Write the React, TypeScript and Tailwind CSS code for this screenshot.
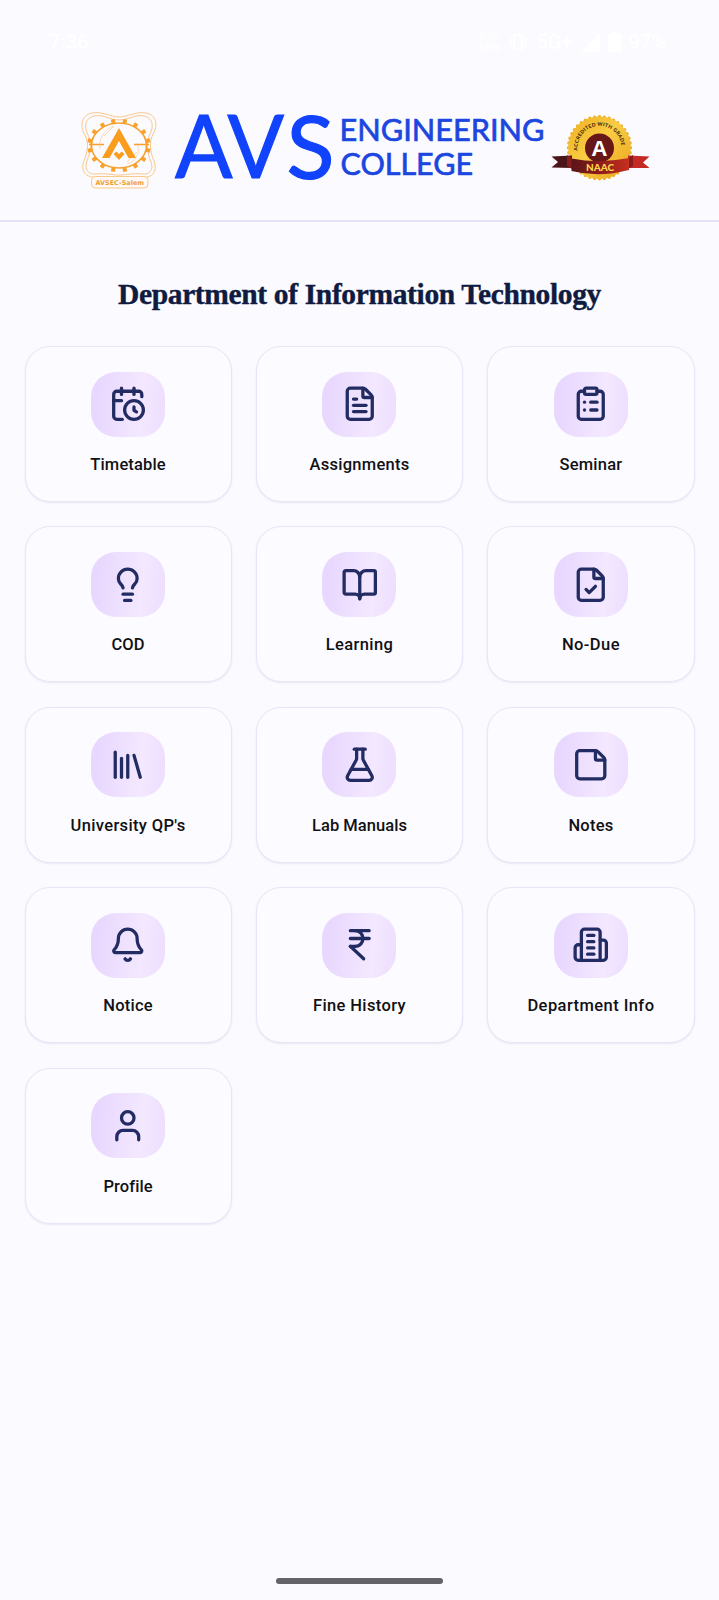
import React from "react";

type Item = { label: string; width: number; icon: string[]; circles?: [number, number, number][]; rects?: [number, number, number, number, number][] };

const FILE = ["M6 22a2 2 0 0 1-2-2V4a2 2 0 0 1 2-2h8a2.4 2.4 0 0 1 1.704.706l3.588 3.588A2.4 2.4 0 0 1 20 8v12a2 2 0 0 1-2 2z", "M14 2v5a1 1 0 0 0 1 1h5"];

const items: Item[] = [
  { label: "Timetable", width: 75.5, icon: ["M21 7.5V6a2 2 0 0 0-2-2H5a2 2 0 0 0-2 2v14a2 2 0 0 0 2 2h3.5", "M16 2v4", "M8 2v4", "M3 10h5", "M16 14v2.2l1.6 1"], circles: [[16, 16, 6]] },
  { label: "Assignments", width: 100, icon: [...FILE, "M10 9H8", "M16 13H8", "M16 17H8"] },
  { label: "Seminar", width: 63, icon: ["M16 4h2a2 2 0 0 1 2 2v14a2 2 0 0 1-2 2H6a2 2 0 0 1-2-2V6a2 2 0 0 1 2-2h2", "M12 11h4", "M12 16h4", "M8 11h.01", "M8 16h.01"], rects: [[8, 2, 8, 4, 1]] },
  { label: "COD", width: 33, icon: ["M15 14c.2-1 .7-1.7 1.5-2.5 1-.9 1.5-2.2 1.5-3.5A6 6 0 0 0 6 8c0 1 .2 2.2 1.5 3.5.7.7 1.3 1.5 1.5 2.5", "M9 18h6", "M10 22h4"] },
  { label: "Learning", width: 67.5, icon: ["M12 7v14", "M3 18a1 1 0 0 1-1-1V4a1 1 0 0 1 1-1h5a4 4 0 0 1 4 4 4 4 0 0 1 4-4h5a1 1 0 0 1 1 1v13a1 1 0 0 1-1 1h-6a3 3 0 0 0-3 3 3 3 0 0 0-3-3z"] },
  { label: "No-Due", width: 58, icon: [...FILE, "m9 15 2 2 4-4"] },
  { label: "University QP's", width: 115, icon: ["m16 6 4 14", "M12 6v14", "M8 8v12", "M4 4v16"] },
  { label: "Lab Manuals", width: 95, icon: ["M14 2v6a2 2 0 0 0 .245.96l5.51 10.08A2 2 0 0 1 18 22H6a2 2 0 0 1-1.755-2.96l5.51-10.08A2 2 0 0 0 10 8V2", "M8.5 2h7", "M6.453 15h11.094"] },
  { label: "Notes", width: 45, icon: ["M21 9a2.4 2.4 0 0 0-.706-1.706l-3.588-3.588A2.4 2.4 0 0 0 15 3H5a2 2 0 0 0-2 2v14a2 2 0 0 0 2 2h14a2 2 0 0 0 2-2z", "M15 3v5a1 1 0 0 0 1 1h5"] },
  { label: "Notice", width: 49.5, icon: ["M10.268 21a2 2 0 0 0 3.464 0", "M3.262 15.326A1 1 0 0 0 4 17h16a1 1 0 0 0 .74-1.673C19.41 13.956 18 12.499 18 8A6 6 0 0 0 6 8c0 4.499-1.411 5.956-2.738 7.326"] },
  { label: "Fine History", width: 93, icon: ["M6 3h12", "M6 8h12", "m6 13 8.5 8", "M6 13h3", "M9 13c6.667 0 6.667-10 0-10"] },
  { label: "Department Info", width: 127, icon: ["M6 22V4a2 2 0 0 1 2-2h8a2 2 0 0 1 2 2v18Z", "M6 12H4a2 2 0 0 0-2 2v6a2 2 0 0 0 2 2h2", "M18 9h2a2 2 0 0 1 2 2v9a2 2 0 0 1-2 2h-2", "M10 6h4", "M10 10h4", "M10 14h4", "M10 18h4"] },
  { label: "Profile", width: 49, icon: ["M19 21v-2a4 4 0 0 0-4-4H9a4 4 0 0 0-4 4v2"], circles: [[12, 7, 4]] },
];

/** Spreads or tightens the letters so that the text takes exactly `width` pixels. */
function FitText({ width, children }: { width: number; children: string }) {
  const ref = React.useRef<HTMLSpanElement>(null);
  const [spacing, setSpacing] = React.useState(0);
  React.useLayoutEffect(() => {
    if (!ref.current) return;
    const natural = ref.current.getBoundingClientRect().width - spacing * children.length;
    setSpacing((width - natural) / children.length);
  }, [width, children]);
  return (
    <span ref={ref} className="inline-block whitespace-nowrap" style={{ letterSpacing: spacing }}>
      {children}
    </span>
  );
}

function Card({ item }: { item: Item }) {
  return (
    <div className="flex h-[156px] flex-col items-center rounded-[25px] border border-[#e8e5f6] bg-[#fcfbff] pt-[24.5px] shadow-[0_1px_2px_rgba(80,70,150,0.10)]">
      <div className="flex h-[65px] w-[74px] items-center justify-center rounded-[25px] bg-[linear-gradient(95deg,#e8d7fe_10%,#f3e8ff_68%,#ecddfe_100%)]">
        <svg className="size-[37.5px]" viewBox="0 0 24 24" fill="none" stroke="#222c62" strokeWidth="2.1" strokeLinecap="round" strokeLinejoin="round">
          {item.icon.map((d) => <path key={d} d={d} />)}
          {item.circles?.map(([x, y, r]) => <circle key={x} cx={x} cy={y} r={r} />)}
          {item.rects?.map(([x, y, w, h, r]) => <rect key={x} x={x} y={y} width={w} height={h} rx={r} />)}
        </svg>
      </div>
      <div className="mt-[16.5px] font-['Roboto',sans-serif] text-[16.5px] leading-[24px] font-medium text-[#111114]">
        <FitText width={item.width}>{item.label}</FitText>
      </div>
    </div>
  );
}

const teeth = Array.from({ length: 16 }, (_, i) => i * 22.5 + 11.25);
const scallops = Array.from({ length: 40 }, (_, i) => (i * Math.PI) / 20);

function Crest() {
  return (
    <svg className="h-[80px] w-[78px] shrink-0" viewBox="80 111 78 80">
      <g fill="none" stroke="#f9c98b" strokeWidth="1">
        <path d="M92 113C103 111 110 117 119 117S136 111 146 113C157 115 158 126 153 134C149 142 150 152 154 161C158 172 152 178 143 177H96C86 178 80 171 84 161C88 151 89 143 85 135C79 125 82 115 92 113Z" />
        <path d="M94 116C104 114 110 120 119 120S136 114 144 116C153 118 154 126 150 134C146 142 147 153 151 162C154 170 149 175 142 174C132 173 127 175 119 175S106 173 96 174C88 175 84 169 87 161C91 151 92 143 88 135C83 125 86 118 94 116Z" />
        <rect x="91.5" y="176.5" width="56.500" height="11.500" rx="4" fill="#fffaf5" />
      </g>
      <g fill="#f8a12c">
        {teeth.map((a) => (
          <rect key={a} x="-2" y="-2.200" width="4" height="4.500" transform={`translate(${119 + 29.5 * Math.cos((a * Math.PI) / 180)} ${145.5 + 24.5 * Math.sin((a * Math.PI) / 180)}) rotate(${a + 90})`} />
        ))}
      </g>
      <ellipse cx="119" cy="145.500" rx="27.500" ry="22.500" fill="none" stroke="#f8a12c" strokeWidth="1.600" />
      <path d="M100 149C98 139 105 129 114 126M137 143C141 153 136 161 127 164M104 136L113 127M127 162L137 152" fill="none" stroke="#fbd3a0" strokeWidth="0.8" />
      <path d="M89 144.500H104M134 144.500H149" stroke="#f8a12c" strokeWidth="1.500" />
      <path d="M119 128L102 158H109.500L119 141L128.500 158H136Z" fill="#fa9d1e" />
      <path d="M113.500 154L116.500 151.500L119 154L121.500 151.500L124.500 154L119 160Z" fill="#fa9d1e" />
      <text x="95.500" y="184.800" textLength="48.500" lengthAdjust="spacingAndGlyphs" fill="#ef9d3b" fontSize="6.500" fontWeight="700" fontFamily="DejaVu Sans, sans-serif">AVSEC-Salem</text>
    </svg>
  );
}

function Wordmark() {
  return (
    <svg className="-mt-[20px] h-[120px] w-[376px] shrink-0" viewBox="173 87 376 120" fontFamily="Lato, sans-serif">
      <g fill="#1043fb" stroke="#1043fb" strokeWidth="1.200" fontSize="87">
        <text x="175" y="177.500" textLength="57.500" lengthAdjust="spacingAndGlyphs">A</text>
        <text x="227.500" y="177.500" textLength="56.500" lengthAdjust="spacingAndGlyphs">V</text>
        <text x="286.500" y="178.500" textLength="48" lengthAdjust="spacingAndGlyphs">S</text>
      </g>
      <g fill="#1b46df" stroke="#1b46df" strokeWidth="0.7" fontSize="31.500">
        <text x="339.500" y="141.300" textLength="205" lengthAdjust="spacingAndGlyphs">ENGINEERING</text>
        <text x="340.500" y="175.300" textLength="132.500" lengthAdjust="spacingAndGlyphs">COLLEGE</text>
      </g>
    </svg>
  );
}

function NaacBadge() {
  return (
    <svg className="h-[70px] w-[100px] shrink-0" viewBox="551 113 100 70">
      <defs>
        <linearGradient id="gold" x1="0" y1="0" x2="1" y2="1">
          <stop offset="0" stopColor="#f0ae20" />
          <stop offset="0.45" stopColor="#f9cc44" />
          <stop offset="1" stopColor="#e9a41c" />
        </linearGradient>
        <linearGradient id="ribbon" x1="0" x2="1">
          <stop offset="0" stopColor="#5a1518" />
          <stop offset="0.5" stopColor="#8f1c1b" />
          <stop offset="1" stopColor="#c7301f" />
        </linearGradient>
        <path id="arc" d="M577.800 151.500A22 22 0 1 1 621.200 151.500" />
      </defs>
      <g fill="#efb029">
        {scallops.map((a) => <circle key={a} cx={599.5 + 31 * Math.cos(a)} cy={147.8 + 31 * Math.sin(a)} r="1.700" />)}
      </g>
      <circle cx="599.500" cy="147.800" r="31.300" fill="url(#gold)" />
      <circle cx="599.500" cy="148" r="14.500" fill="#681719" />
      <text fill="#3a2508" fontSize="5" fontWeight="900" fontFamily="Lato, sans-serif">
        <textPath href="#arc" startOffset="1" textLength="69">ACCREDITED WITH GRADE</textPath>
      </text>
      <path d="M551.500 156.500L572 155.500V168L551.500 167.500L558 162Z" fill="#4b1619" />
      <path d="M649.500 156.500L628 155.500V168L649.500 168L643 162.500Z" fill="#c52a25" />
      <path d="M567 155L572 158V169L567 166ZM633 155L628 158V169L633 166Z" fill="#8a1c1e" />
      <path d="M571.500 158.500Q599 164 629 158V170Q599 178 571.500 171Z" fill="url(#ribbon)" />
      <text x="599.300" y="156" textAnchor="middle" fill="#fff" fontSize="22.500" fontWeight="700" fontFamily="Liberation Sans, sans-serif">A</text>
      <text x="586" y="171.300" textLength="28" lengthAdjust="spacingAndGlyphs" fill="#ffda4b" fontSize="9.500" fontWeight="900" fontFamily="Lato, sans-serif">NAAC</text>
    </svg>
  );
}

function StatusBar() {
  return (
    <div className="flex h-[84px] items-center justify-between pr-[53px] pl-[49px] font-['Roboto',sans-serif] text-[20px] font-medium text-white">
      <span>7:36</span>
      <div className="flex items-center gap-[8px]">
        <span className="flex flex-col text-center text-[10px] leading-[12px]"><span>0.00</span><span>KB/s</span></span>
        <svg className="h-[16px] w-[20px]" viewBox="0 0 20 16" fill="none" stroke="white" strokeWidth="2"><rect x="6" y="1" width="8" height="14" rx="1" /><path d="M3 4v8M17 4v8" /></svg>
        <span>5G+</span>
        <svg className="h-[19px] w-[19px]" viewBox="0 0 19 19"><path d="M19 0V19H0Z" fill="white" /></svg>
        <svg className="h-[20px] w-[13px]" viewBox="0 0 13 20"><path d="M4 0h5v2h4v18H0V2h4Z" fill="white" /></svg>
        <span>97%</span>
      </div>
    </div>
  );
}

export default function App() {
  return (
    <div className="flex h-[1600px] w-[719px] flex-col bg-[#fbfaff]">
      <header className="h-[222px] shrink-0 border-b-2 border-[#e4e1f8]">
        <StatusBar />
        <div className="flex pt-[23px] pl-[80px]">
          <div className="mt-[4px] mr-[15px] h-[80px] w-[78px]"><Crest /></div>
          <Wordmark />
          <div className="mt-[6px] ml-[2px]"><NaacBadge /></div>
        </div>
      </header>
      <main className="flex flex-1 flex-col">
        <h1 className="mt-[52px] flex h-[40px] items-center justify-center font-['Liberation_Serif',serif] text-[29.5px] leading-[40px] font-bold text-[#0f1b40] [-webkit-text-stroke:0.4px_#0f1b40]">
          <FitText width={483}>Department of Information Technology</FitText>
        </h1>
        <div className="mt-[32px] grid grid-cols-3 gap-x-[24.300px] gap-y-[24.400px] pr-[24.500px] pl-[24.500px]">
          {items.map((item) => <Card key={item.label} item={item} />)}
        </div>
      </main>
      <footer className="flex h-[26px] justify-center">
        <div className="mt-[4px] h-[6px] w-[167px] rounded-full bg-[#646369]" />
      </footer>
    </div>
  );
}
